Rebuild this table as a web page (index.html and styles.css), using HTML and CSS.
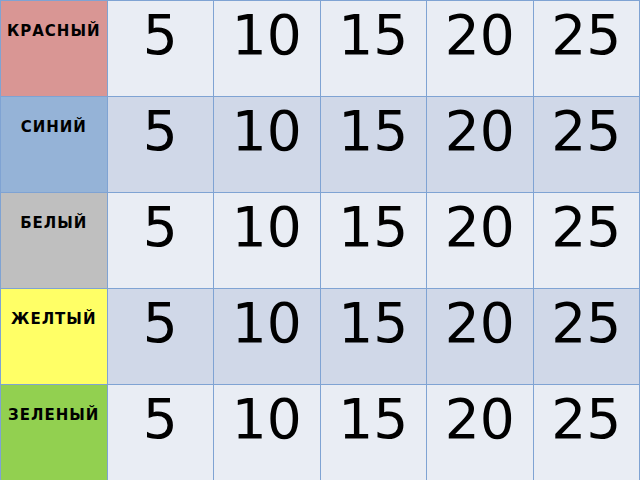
FILE: index.html
```html
<!DOCTYPE html>
<html>
<head>
<meta charset="utf-8">
<link rel="stylesheet" href="styles.css">
</head>
<body>
<table class="grid">
  <tr class="odd">
    <th class="label red">КРАСНЫЙ</th>
    <td>5</td><td>10</td><td>15</td><td>20</td><td>25</td>
  </tr>
  <tr class="even">
    <th class="label blue">СИНИЙ</th>
    <td>5</td><td>10</td><td>15</td><td>20</td><td>25</td>
  </tr>
  <tr class="odd">
    <th class="label gray">БЕЛЫЙ</th>
    <td>5</td><td>10</td><td>15</td><td>20</td><td>25</td>
  </tr>
  <tr class="even">
    <th class="label yellow">ЖЕЛТЫЙ</th>
    <td>5</td><td>10</td><td>15</td><td>20</td><td>25</td>
  </tr>
  <tr class="odd">
    <th class="label green">ЗЕЛЕНЫЙ</th>
    <td>5</td><td>10</td><td>15</td><td>20</td><td>25</td>
  </tr>
</table>
</body>
</html>
```
FILE: styles.css
```css
html, body {
  margin: 0;
  padding: 0;
  background: #ffffff;
}
.grid {
  border-collapse: collapse;
  width: 640px;
  height: 480px;
  table-layout: fixed;
  font-family: "DejaVu Sans", sans-serif;
  color: #000000;
}
.grid tr {
  height: 96px;
}
.grid td,
.grid th {
  border: 1px solid #7fa3d3;
  vertical-align: top;
  text-align: center;
  padding: 0;
}
.grid td {
  font-size: 55px;
  line-height: normal;
  padding-top: 2px;
}
.odd td {
  background: #e9edf4;
}
.even td {
  background: #d0d8e8;
}
.grid th.label {
  font-size: 15px;
  font-weight: bold;
  letter-spacing: 1px;
  line-height: normal;
  padding-top: 21px;
}
.red { background: #d99694; }
.blue { background: #95b3d7; }
.gray { background: #bfbfbf; }
.yellow { background: #ffff66; }
.green { background: #92d050; }
```
